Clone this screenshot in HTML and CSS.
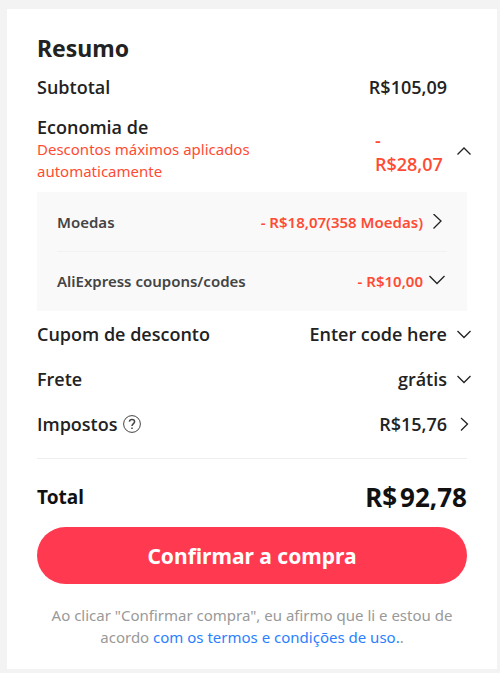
FILE: index.html
```html
<!DOCTYPE html>
<html lang="pt-BR">
<head>
    <meta charset="UTF-8">
    <meta name="viewport" content="width=device-width, initial-scale=1">
    <title>Resumo</title>
    <link rel="stylesheet" href="styles.css">
</head>
<body>

    <main class="summary">
        <h2>Resumo</h2>

        <div class="row subtotal">
            <span>Subtotal</span>
            <span class="value">R$105,09</span>
        </div>

        <div class="row savings">
            <div class="savings-label">
                <span>Economia de</span>
                <small>Descontos máximos aplicados automaticamente</small>
            </div>
            <button class="value red" type="button" aria-expanded="true">
                <span class="savings-amount">- R$28,07</span>
                <svg class="icon" viewBox="0 0 16 16"><path d="M1.500 10.500 8 4l6.500 6.500"/></svg>
            </button>
        </div>

        <div class="details">
            <div class="row detail">
                <span>Moedas</span>
                <button class="red" type="button">- R$18,07(358 Moedas)
                    <svg class="icon" viewBox="0 0 16 16"><path d="M4.500 0 12 7 4.500 14.500"/></svg>
                </button>
            </div>
            <div class="row detail">
                <span>AliExpress coupons/codes</span>
                <button class="red" type="button">- R$10,00
                    <svg class="icon" viewBox="0 0 16 16"><path d="M0.500 3 8 10.500 15.500 3"/></svg>
                </button>
            </div>
        </div>

        <div class="row">
            <span>Cupom de desconto</span>
            <button class="value" type="button">Enter code here
                <svg class="icon" viewBox="0 0 16 16"><path d="M1.500 5 8 11.500 14.500 5"/></svg>
            </button>
        </div>
        <div class="row">
            <span>Frete</span>
            <button class="value" type="button">grátis
                <svg class="icon" viewBox="0 0 16 16"><path d="M1.500 5 8 11.500 14.500 5"/></svg>
            </button>
        </div>
        <div class="row">
            <span class="tax">Impostos
                <svg class="help" viewBox="0 0 18 18"><circle cx="9" cy="9" r="8.400"/><path class="mark" d="M6.400 6.700C6.600 5.300 7.600 4.600 9 4.600c1.500 0 2.600.8 2.600 2.200C11.600 8.600 9 8.700 9 11M9 12.400v1.500"/></svg>
            </span>
            <button class="value" type="button">R$15,76
                <svg class="icon" viewBox="0 0 16 16"><path d="M5 2 11.500 8 5 14.500"/></svg>
            </button>
        </div>

        <div class="total">
            <span>Total</span>
            <strong><span>R$</span><span>92,78</span></strong>
        </div>

        <button class="confirm" type="button">Confirmar a compra</button>

        <p class="terms">Ao clicar "Confirmar compra", eu afirmo que li e estou de acordo <a href="#">com os termos e condições de uso.</a>.</p>
    </main>

</body>
</html>
```
FILE: styles.css
```css
* {
    box-sizing: border-box;
}

body {
    margin: 0;
    padding: 9px 3px 4px 7px;
    background: #f3f3f3;
    color: #222;
    font-family: "Open Sans", "Noto Sans", sans-serif;
    font-size: 18px;
    font-weight: 600;
    line-height: 24px;
}

button {
    padding: 0;
    border: none;
    background: none;
    color: inherit;
    font: inherit;
    cursor: pointer;
}

.summary {
    padding: 23px 30px 20px;
    background: #fff;
}

h2 {
    margin: 0;
    font-family: "Noto Sans", sans-serif;
    font-size: 23px;
    font-weight: 700;
    line-height: 32px;
}

.row {
    display: flex;
    align-items: center;
    justify-content: space-between;
    min-height: 45px;
}

.row button {
    display: flex;
    align-items: center;
    gap: 5px;
}

.row .value {
    gap: 9px;
}

.icon {
    flex: none;
    width: 16px;
    height: 16px;
    fill: none;
    stroke: #222;
    stroke-width: 1.300;
}

.value .icon {
    margin-right: -5px;
}

.subtotal {
    min-height: 46px;
    padding-right: 20px;
}

/* Savings */
.savings {
    align-items: flex-start;
    min-height: 82px;
    padding-top: 6px;
}

.savings-label {
    width: 240px;
    line-height: 22px;
}

.savings small {
    display: block;
    font-family: "Noto Sans", sans-serif;
    font-size: 15px;
    font-weight: 400;
}

.red,
.savings small {
    color: #ff4b33;
}

.savings .value {
    padding-top: 12px;
}

.savings-amount {
    width: 72px;
    text-align: left;
}

.details {
    padding: 0 20px;
    background: #f9f9f9;
    font-family: "Noto Sans", sans-serif;
    font-size: 15px;
}

.detail {
    min-height: 59px;
}

.detail > span {
    color: #444;
}

.detail button {
    gap: 6px;
}

.detail .icon {
    margin-right: 2px;
}

.detail + .detail {
    min-height: 60px;
    padding-bottom: 2px;
    border-top: 1px solid #f2f2f2;
}

/* Taxes */
.tax {
    display: flex;
    align-items: center;
    gap: 5px;
}

.help {
    width: 18px;
    height: 18px;
    fill: none;
    stroke: #444;
    stroke-width: 1;
}

.help .mark {
    stroke-width: 1.500;
}

.total {
    display: flex;
    align-items: center;
    justify-content: space-between;
    margin-top: 12px;
    padding: 21px 0 13px;
    border-top: 1px solid #eee;
    color: #111;
    font-family: "Noto Sans", sans-serif;
    font-size: 19px;
    font-weight: 700;
}

.total strong {
    display: flex;
    gap: 3px;
    font-size: 26px;
    font-weight: 700;
    line-height: 34px;
}

.confirm {
    width: 100%;
    min-height: 57px;
    border-radius: 29px;
    background: #ff3a50;
    color: #fff;
    font-family: "Noto Sans", sans-serif;
    font-size: 21px;
    font-weight: 700;
}

.terms {
    margin: 20px 0 0;
    padding-bottom: 1px;
    color: #999;
    font-family: "Noto Sans", sans-serif;
    font-size: 15px;
    font-weight: 400;
    line-height: 22px;
    text-align: center;
}

.terms a {
    color: #2a7fff;
    text-decoration: none;
}
```
